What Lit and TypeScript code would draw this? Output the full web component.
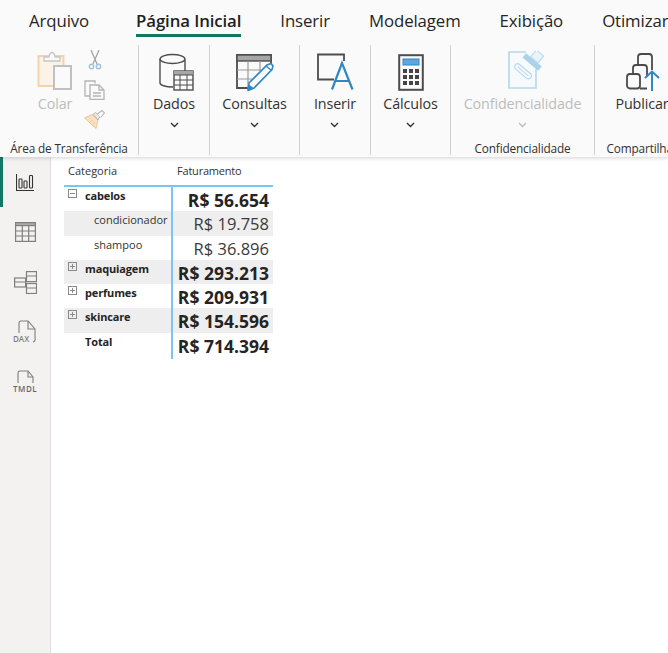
import { LitElement, html, css, svg } from "lit";
import { customElement } from "lit/decorators.js";

const GRAY = "#4d4d4d";
const BLUE = "#2f88c4";

const colarIcon = html`<svg width="36" height="40" viewBox="0 0 36 40" fill="none">
  <rect x="1.500" y="5" width="25" height="30" fill="#fbf3e8" stroke="#f2d3ac" stroke-width="2"/>
  <path d="M7 10V6h5C12.500 3 14 1.500 15 1.500S17.500 3 18 6h5v4Z" fill="#fafafa" stroke="#c6c6c6" stroke-width="1.300"/>
  <rect x="17" y="15" width="17" height="23" fill="#fafafa" stroke="#c0c0c0" stroke-width="2"/>
</svg>`;

const scissorsIcon = html`<svg width="14" height="20" viewBox="0 0 14 20" fill="none">
  <path d="M3 0l6 14M11 0L5 14" stroke="#a0a0a0" stroke-width="1.200"/>
  <circle cx="3.500" cy="16.500" r="2.200" stroke="#9cc3e0" stroke-width="1.400"/>
  <circle cx="10.500" cy="16.500" r="2.200" stroke="#9cc3e0" stroke-width="1.400"/>
</svg>`;

const copyIcon = html`<svg width="21" height="20" viewBox="0 0 21 20" fill="none" stroke="#b4b4b4" stroke-width="1.300">
  <path d="M11 3.500V1H1v15h5"/>
  <path d="M6 5h9l5 5v9.500H6Z" fill="#fafafa"/>
  <path d="M15 5v5h5M9 13h8M9 16h8"/>
</svg>`;

const brushIcon = html`<svg width="21" height="19" viewBox="0 0 21 19" fill="none">
  <path d="M.5 8L8 4.500l6 5.500-2 8.500Z" fill="#f9e0c2" stroke="#f0c596"/>
  <path d="M5 13l4-3M8 16l3-4" stroke="#f0c596" stroke-width=".8"/>
  <path d="M9 4.500l2.500-2 4.500 4L14 10Z" fill="#e6e6e6" stroke="#b4b4b4"/>
  <path d="M13.500 4l4.500-3.500 2.500 2.500-4 4.500" fill="#fafafa" stroke="#b4b4b4" stroke-width="1.100"/>
</svg>`;

const dadosIcon = html`<svg width="36" height="38" viewBox="0 0 36 38" fill="none">
  <path d="M26 7v11M1 6v24c0 2 5 4 13 4" stroke="${GRAY}" stroke-width="1.400"/>
  <ellipse cx="13.500" cy="6" rx="12.500" ry="4.500" stroke="${GRAY}" stroke-width="1.400"/>
  <rect x="15" y="18" width="19" height="19" fill="#fafafa" stroke="${GRAY}" stroke-width="1.400"/>
  <rect x="15" y="18" width="19" height="4" fill="#a6a6a6"/>
  <path d="M15 22h19M15 27h19M15 32h19M21 22v15M28 22v15" stroke="${GRAY}"/>
</svg>`;

const consultasIcon = html`<svg width="38" height="38" viewBox="0 0 38 38" fill="none">
  <path d="M35 12V2H1v33h11" stroke="${GRAY}" stroke-width="1.800"/>
  <rect x="1" y="2" width="34" height="6" fill="#a6a6a6" stroke="${GRAY}" stroke-width="1.400"/>
  <path d="M1 17h24M1 26h15M12 8v27M24 8v10" stroke="#9a9a9a" stroke-width="1.200"/>
  <path d="M13 30L31 12l4-1.500 2 2.500-1 3.500L18 35l-6 2.500Z" fill="#fafafa" stroke="${BLUE}" stroke-width="1.600"/>
  <path d="M12 37.500l1-6 5 4Z" fill="${BLUE}"/>
  <path d="M30 13l5 4" stroke="${BLUE}" stroke-width="1.400"/>
</svg>`;

const inserirIcon = html`<svg width="37" height="38" viewBox="0 0 37 38" fill="none">
  <path d="M17 26.500H1V1.500H27V8" stroke="${GRAY}" stroke-width="1.800"/>
  <path d="M15 36.500L25 10l10.500 26.500M19 28h13" stroke="${BLUE}" stroke-width="2.200"/>
</svg>`;

const calculosIcon = html`<svg width="26" height="37" viewBox="0 0 26 37" fill="none">
  <rect x="1.200" y="1.200" width="23.600" height="34.600" fill="#fafafa" stroke="${GRAY}" stroke-width="2"/>
  <rect x="5" y="5" width="16" height="6" fill="#5ea6dc" stroke="${BLUE}"/>
  ${[15, 21, 27].flatMap((y) =>
    [5, 11, 17].map((x) => svg`<rect x="${x}" y="${y}" width="4" height="4" fill="#444"/>`)
  )}
</svg>`;

const confidIcon = html`<svg width="36" height="40" viewBox="0 0 36 40" fill="none">
  <path d="M18 1H1V37H28V18" fill="#f6fafd" stroke="#b5d8ec" stroke-width="1.600"/>
  <g transform="rotate(40 15 20.300)">
    <rect x="5" y="17.300" width="20" height="6" rx="3" fill="#fafafa" stroke="#b5d8ec" stroke-width="1.200"/>
    <path d="M8 20.300h14" stroke="#b5d8ec"/>
  </g>
  <path d="M16.300 4.300L32 17.700" stroke="#a9d3ea" stroke-width="5.500"/>
  <rect x="24.500" y="1" width="9.500" height="9" transform="rotate(40 29.300 5.300)" fill="#e8f3fa" stroke="#b5d8ec"/>
</svg>`;

const publicarIcon = html`<svg width="36" height="38" viewBox="0 0 36 38" fill="none" stroke="#4a4a4a" stroke-width="1.800">
  <path d="M12 12V4a3 3 0 0 1 3-3h8a3 3 0 0 1 3 3v13"/>
  <path d="M7 21v-6a3 3 0 0 1 3-3h8a3 3 0 0 1 3 3v6"/>
  <rect x="1" y="21" width="13" height="14.500" rx="3"/>
  <path d="M14 35.500h7M21 21v3"/>
  <path d="M26 38V19M19 25l7-6.500 7 6.500" stroke="${BLUE}" stroke-width="2"/>
</svg>`;

const chevron = html`<svg width="9" height="6" viewBox="0 0 9 6" fill="none"><path d="M1 1l3.500 3.500L8 1" stroke="currentColor" stroke-width="1.400"/></svg>`;

const sideIcons = [
  html`<svg width="18" height="17" viewBox="0 0 18 17" fill="none" stroke="#333" stroke-width="1.100">
    <path d="M.5 0v16.500H18"/>
    <rect x="3" y="5" width="3" height="9" rx=".8"/>
    <rect x="8" y="7" width="3" height="7" rx=".8"/>
    <rect x="13.500" y="1.500" width="3" height="12.500" rx=".8"/>
  </svg>`,
  html`<svg width="21" height="20" viewBox="0 0 21 20" fill="none" stroke="#7f7f7f" stroke-width="1.200">
    <rect x=".6" y=".6" width="19.800" height="18.800"/>
    <rect x=".6" y=".6" width="19.800" height="3" fill="#aaa"/>
    <path d="M.6 9h19.800M.6 14h19.800M7.300 4v15M13.700 4v15"/>
  </svg>`,
  html`<svg width="23" height="23" viewBox="0 0 23 23" fill="none" stroke="#7f7f7f" stroke-width="1.200">
    <rect x=".6" y="7" width="11" height="9"/>
    <rect x="12.500" y=".6" width="10" height="10"/>
    <rect x="12.500" y="12.500" width="10" height="10"/>
    <path d="M.6 11h11M12.500 5h10M12.500 17h10"/>
  </svg>`,
  html`<svg width="24" height="24" viewBox="0 0 24 24" fill="none" stroke="#7f7f7f" stroke-width="1.100">
    <path d="M6 13V3a2 2 0 0 1 2-2h7l7 8v9a3 3 0 0 1-2 4"/>
    <path d="M15 1v8h7"/>
    <text x="0" y="22" font-family="'Open Sans',sans-serif" font-size="8" font-weight="600" fill="#7f7f7f" stroke="none">DAX</text>
  </svg>`,
  html`<svg width="24" height="24" viewBox="0 0 24 24" fill="none" stroke="#7f7f7f" stroke-width="1.100">
    <path d="M5 13V3a2 2 0 0 1 2-2h8l5 6v6"/>
    <path d="M15 1v6h5"/>
    <text x="0" y="22" font-family="'Open Sans',sans-serif" font-size="8" font-weight="600" letter-spacing=".5" fill="#666" stroke="none">TMDL</text>
  </svg>`,
];

type Row = { name: string; value: string; kind: "open" | "closed" | "child" | "total" };

const rows: Row[] = [
  { name: "cabelos", value: "R$ 56.654", kind: "open" },
  { name: "condicionador", value: "R$ 19.758", kind: "child" },
  { name: "shampoo", value: "R$ 36.896", kind: "child" },
  { name: "maquiagem", value: "R$ 293.213", kind: "closed" },
  { name: "perfumes", value: "R$ 209.931", kind: "closed" },
  { name: "skincare", value: "R$ 154.596", kind: "closed" },
  { name: "Total", value: "R$ 714.394", kind: "total" },
];

@customElement("app-root")
export class AppRoot extends LitElement {
  static styles = css`
    :host {
      display: block;
      width: 668px;
      height: 653px;
      overflow: hidden;
      background: #fff;
      font-family: "Open Sans", "Noto Sans", sans-serif;
      color: #252423;
      position: relative;
    }

    .ribbon {
      height: 157px;
      background: #fafafa;
      box-shadow: 0 1px 4px rgba(0, 0, 0, 0.18);
      position: relative;
      z-index: 1;
      overflow: hidden;
    }

    .tabs {
      display: flex;
      height: 45px;
      padding-left: 29px;
      gap: 39px;
      font-size: 16.8px;
      white-space: nowrap;
    }

    .tab {
      height: 37px;
      line-height: 42px;
      letter-spacing: -0.1px;
      flex: none;
    }

    .tab.first {
      margin-right: 8px;
    }

    .tab.active {
      font-weight: 600;
      border-bottom: 3px solid #117865;
      box-sizing: border-box;
      color: #201f1e;
    }

    .groups {
      display: flex;
      height: 110px;
    }

    .group {
      flex: none;
      box-sizing: border-box;
      border-right: 1px solid #d2d0ce;
      display: flex;
      flex-direction: column;
    }

    .group.last {
      border-right: none;
    }

    .buttons {
      flex: 1;
      display: flex;
      justify-content: center;
      min-height: 0;
    }

    .group-label {
      height: 20px;
      line-height: 26px;
      font-size: 11.8px;
      letter-spacing: -0.15px;
      text-align: center;
      white-space: nowrap;
      color: #323130;
    }

    .btn {
      display: flex;
      flex-direction: column;
      align-items: center;
      font-size: 14.3px;
      letter-spacing: -0.1px;
      white-space: nowrap;
      color: #323130;
    }

    .icon {
      height: 46px;
      display: flex;
      align-items: flex-end;
    }

    /* icons sit a little right of their label */
    .icon.s1 {
      margin-left: 2px;
    }

    .icon.s2 {
      margin-left: 5px;
    }

    .icon.s3 {
      margin-left: 6px;
    }

    .icon.s4 {
      margin-left: 7px;
    }

    .btn-label {
      margin-top: 3px;
      line-height: 20px;
    }

    .chev {
      margin-top: 8px;
      height: 8px;
      display: flex;
      color: #323130;
    }

    .disabled,
    .disabled .chev {
      color: #bdbdbd;
    }

    .buttons.clipboard {
      justify-content: flex-start;
      padding-left: 37px;
      gap: 11px;
    }

    .small-icons {
      display: flex;
      flex-direction: column;
      align-items: center;
      width: 21px;
      padding-top: 5px;
    }

    .small-icons > * {
      display: block;
    }

    .small-icons svg:nth-child(2) {
      margin-top: 10px;
    }

    .small-icons svg:nth-child(3) {
      margin-top: 10px;
    }

    .body {
      display: flex;
      height: 496px;
    }

    .side {
      width: 50px;
      flex: none;
      background: #f3f2f1;
      border-right: 1px solid #e1dfdd;
      display: flex;
      flex-direction: column;
    }

    .side-item {
      height: 50px;
      box-sizing: border-box;
      display: flex;
      align-items: center;
      justify-content: center;
      flex: none;
    }

    .side-item.active {
      box-shadow: inset 3px 0 0 #117865;
    }

    .matrix {
      margin: 6px 0 0 13px;
      width: 209px;
      font-size: 11px;
      color: #252423;
    }

    .head {
      display: grid;
      grid-template-columns: 108px 101px;
      height: 22px;
      line-height: 16px;
      border-bottom: 2px solid #7cc3f7;
      color: #333;
    }

    .head span {
      padding-left: 4px;
    }

    .head span + span {
      padding-left: 5px;
      letter-spacing: -0.2px;
    }

    .row {
      display: grid;
      grid-template-columns: 108px 101px;
      height: 24.3px;
    }

    .row.band {
      background: #eeeeee;
    }

    .name {
      display: flex;
      align-items: flex-start;
      line-height: 17px;
      padding-left: 4px;
    }

    .row.bold .name {
      font-weight: 700;
      letter-spacing: -0.15px;
    }

    .row.child .name {
      padding-left: 30px;
      color: #333;
    }

    .box {
      width: 9px;
      height: 9px;
      margin: 2px 8px 0 0;
      flex: none;
    }

    .row.total .name {
      padding-left: 21px;
    }

    .value {
      border-left: 2px solid #7cc3f7;
      margin-left: -1px;
      box-sizing: border-box;
      text-align: right;
      padding-right: 4px;
      font-size: 16.5px;
      line-height: 25px;
      white-space: nowrap;
      color: #3a3a3a;
    }

    .row.bold .value {
      font-weight: 700;
      font-size: 17.5px;
      line-height: 26px;
      color: #252423;
    }
  `;

  private box(open: boolean) {
    return html`<svg class="box" viewBox="0 0 9 9" fill="none" stroke="#8a8a8a">
      <rect x=".5" y=".5" width="8" height="8"/>
      <path d="M2 4.500h5${open ? "" : "M4.500 2v5"}"/>
    </svg>`;
  }

  private button(icon: unknown, label: string, shift = "", disabled = false) {
    return html`<div class="btn ${disabled ? "disabled" : ""}">
      <div class="icon ${shift}">${icon}</div>
      <div class="btn-label">${label}</div>
      <div class="chev">${chevron}</div>
    </div>`;
  }

  render() {
    return html`
      <div class="ribbon">
        <div class="tabs">
          <div class="tab first">Arquivo</div>
          <div class="tab active">Página Inicial</div>
          <div class="tab">Inserir</div>
          <div class="tab">Modelagem</div>
          <div class="tab">Exibição</div>
          <div class="tab">Otimizar</div>
        </div>
        <div class="groups">
          <div class="group" style="width:139px">
            <div class="buttons clipboard">
              <div class="btn disabled">
                <div class="icon">${colarIcon}</div>
                <div class="btn-label">Colar</div>
              </div>
              <div class="small-icons">${scissorsIcon}${copyIcon}${brushIcon}</div>
            </div>
            <div class="group-label">Área de Transferência</div>
          </div>
          <div class="group" style="width:71px">
            <div class="buttons">${this.button(dadosIcon, "Dados", "s3")}</div>
          </div>
          <div class="group" style="width:90px">
            <div class="buttons">${this.button(consultasIcon, "Consultas")}</div>
          </div>
          <div class="group" style="width:71px">
            <div class="buttons">${this.button(inserirIcon, "Inserir", "s1")}</div>
          </div>
          <div class="group" style="width:80px">
            <div class="buttons">${this.button(calculosIcon, "Cálculos")}</div>
          </div>
          <div class="group" style="width:144px">
            <div class="buttons">${this.button(confidIcon, "Confidencialidade", "s4", true)}</div>
            <div class="group-label">Confidencialidade</div>
          </div>
          <div class="group last" style="width:94px">
            <div class="buttons">
              <div class="btn">
                <div class="icon s2">${publicarIcon}</div>
                <div class="btn-label">Publicar</div>
              </div>
            </div>
            <div class="group-label">Compartilhar</div>
          </div>
        </div>
      </div>
      <div class="body">
        <div class="side">
          ${sideIcons.map(
            (icon, i) => html`<div class="side-item ${i === 0 ? "active" : ""}">${icon}</div>`
          )}
        </div>
        <div class="matrix">
          <div class="head"><span>Categoria</span><span>Faturamento</span></div>
          ${rows.map(
            (r, i) => html`<div
              class="row ${i % 2 === 1 ? "band" : ""} ${r.kind === "child" ? "child" : "bold"} ${r.kind === "total" ? "total" : ""}"
            >
              <div class="name">
                ${r.kind === "open" || r.kind === "closed" ? this.box(r.kind === "open") : ""}${r.name}
              </div>
              <div class="value">${r.value}</div>
            </div>`
          )}
        </div>
      </div>
    `;
  }
}

declare global {
  interface HTMLElementTagNameMap {
    "app-root": AppRoot;
  }
}
